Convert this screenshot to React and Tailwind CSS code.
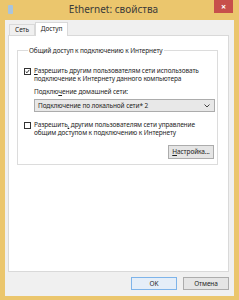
import React from "react";

const font = { fontFamily: '"Noto Sans", "Open Sans", sans-serif' };

function CheckBox({ checked }) {
  return (
    <span className="mt-[1px] flex h-[7px] w-[7px] shrink-0 items-center justify-center border border-[#333] bg-white">
      {checked && (
        <svg viewBox="0 0 7 7" className="h-[7px] w-[7px]">
          <path d="M1 3.5 L2.8 5.3 L6 1.2" fill="none" stroke="#222" strokeWidth="1.3" />
        </svg>
      )}
    </span>
  );
}

export default function App() {
  return (
    <div
      className="flex h-[300px] w-[239px] flex-col whitespace-nowrap bg-[#ebc66d] text-[6.5px] leading-[8px] tracking-[-0.1px] text-[#1e1e1e]"
      style={font}
    >
      {/* Title bar */}
      <div className="flex h-[20px] shrink-0 items-start">
        <div className="ml-[8px] mt-[5px] h-[9px] w-[5px] rounded-[1px] bg-[#a9c4dc]" />
        <div className="flex-1 pt-[4px] text-center text-[10px] leading-[11px] tracking-normal text-[#3a3a3a]">
          Ethernet: свойства
        </div>
        <div className="mr-[6px] flex h-[13px] w-[19px] items-center justify-center bg-[#c7504b] text-[9px] font-bold leading-none text-white">
          ×
        </div>
      </div>

      {/* Client area */}
      <div className="mx-[5px] mb-[4px] flex flex-1 flex-col bg-[#f0f0f0]">
        {/* Tabs */}
        <div className="ml-[4px] mt-[2px] flex h-[13px] items-end">
          <div className="flex h-[11px] w-[26px] items-center justify-center border border-b-0 border-[#d9d9d9] bg-[#f0f0f0]">
            Сеть
          </div>
          <div className="relative z-10 -mb-[1px] flex h-[14px] w-[33px] items-center justify-center border border-b-0 border-[#d9d9d9] bg-white pb-[1px]">
            Доступ
          </div>
        </div>

        {/* Panel */}
        <div className="ml-[3px] mr-[5px] h-[237px] border border-[#d9d9d9] bg-white pl-[8px] pr-[10px] pt-[10px]">
          <fieldset className="border border-[#dcdcdc] pb-[5px] pl-[6px] pr-[2px]">
            <legend className="ml-[4px] px-[1px] leading-[9px]">
              Общий доступ к подключению к Интернету
            </legend>

            <div className="mt-[12px] flex gap-[3px]">
              <CheckBox checked />
              <div>
                <span className="underline">Р</span>азрешить другим пользователям сети использовать
                <br />
                подключение к Интернету данного компьютера
              </div>
            </div>

            <div className="ml-[10px] mt-[5px]">
              Подклю<span className="underline">ч</span>ение домашней сети:
            </div>
            <div className="ml-[10px] mt-[3px] flex h-[13px] items-center justify-between border border-[#acacac] bg-[#e8e8e8] pl-[3px] pr-[4px]">
              <span>Подключение по локальной сети* 2</span>
              <svg viewBox="0 0 6 4" className="h-[4px] w-[6px]">
                <path d="M0.5 0.5 L3 3 L5.5 0.5" fill="none" stroke="#444" strokeWidth="1" />
              </svg>
            </div>

            <div className="mt-[9px] flex gap-[3px]">
              <CheckBox />
              <div>
                Разрешить<span className="underline">,</span> другим пользователям сети управление
                <br />
                общим доступом к подключению к Интернету
              </div>
            </div>

            <div className="mt-[8px] flex justify-end pr-[1px]">
              <div className="flex h-[14px] w-[46px] items-center justify-center border border-[#acacac] bg-[#e5e5e5]">
                <span className="underline">Н</span>астройка...
              </div>
            </div>
          </fieldset>
        </div>

        {/* Bottom buttons */}
        <div className="mt-[5px] flex justify-end gap-[6px] pr-[5px]">
          <div className="flex h-[13px] w-[46px] items-center justify-center border border-[#7eb4ea] bg-[#e5eef8]">
            OK
          </div>
          <div className="flex h-[13px] w-[46px] items-center justify-center border border-[#acacac] bg-[#e5e5e5]">
            Отмена
          </div>
        </div>
      </div>
    </div>
  );
}
